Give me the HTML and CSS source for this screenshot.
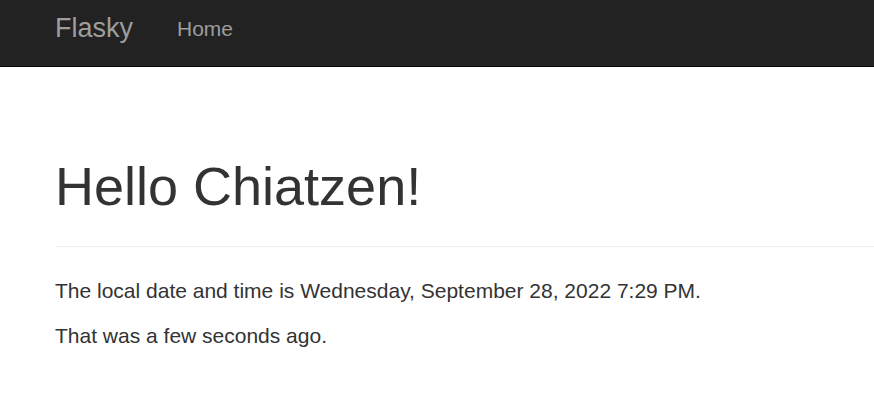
FILE: index.html
```html
<!DOCTYPE html>
<html lang="en">
<head>
<meta charset="utf-8">
<title>Flasky</title>
<link rel="stylesheet" href="styles.css">
</head>
<body>
<nav class="navbar">
  <a class="brand" href="#">Flasky</a>
  <ul class="nav">
    <li><a href="#">Home</a></li>
  </ul>
</nav>
<main class="content">
  <div class="page-header">
    <h1>Hello Chiatzen!</h1>
  </div>
  <p>The local date and time is Wednesday, September 28, 2022 7:29 PM.</p>
  <p>That was a few seconds ago.</p>
</main>
</body>
</html>
```
FILE: styles.css
```css
html, body {
  margin: 0;
  padding: 0;
  background: #fff;
}
body {
  font-family: "Liberation Sans", Arial, Helvetica, sans-serif;
  color: #333;
  font-size: 21px;
  line-height: 30px;
}
.navbar {
  display: flex;
  align-items: flex-start;
  height: 66px;
  background: #222;
  border-bottom: 1px solid #080808;
  padding-left: 55px;
}
.brand {
  display: block;
  font-size: 27px;
  line-height: 27px;
  padding-top: 15.4px;
  color: #9d9d9d;
  text-decoration: none;
}
.nav {
  display: flex;
  list-style: none;
  margin: 0 0 0 44px;
  padding: 0;
}
.nav a {
  display: block;
  font-size: 21px;
  line-height: 21px;
  padding-top: 17.9px;
  color: #9d9d9d;
  text-decoration: none;
}
.content {
  padding: 0 0 0 55px;
}
.page-header {
  margin-top: 90.3px;
  padding-bottom: 29px;
  border-bottom: 1px solid #eee;
}
.page-header h1 {
  margin: 0;
  font-size: 54px;
  line-height: 59.4px;
  font-weight: 500;
}
p {
  margin: 29.7px 0 15px;
}
p + p {
  margin-top: 0;
}
```
